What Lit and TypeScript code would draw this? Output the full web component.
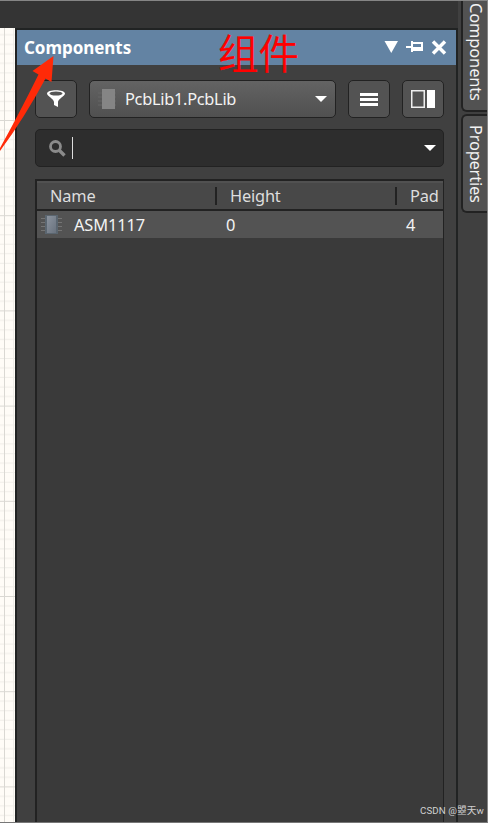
import { LitElement, html, css } from "lit";
import { customElement } from "lit/decorators.js";

@customElement("app-root")
export class AppRoot extends LitElement {
  static styles = css`
    :host { display: block; position: relative; width: 488px; height: 823px; overflow: hidden; box-sizing: border-box;
      background: #3f3f3f; color: #f3f3f3; font: 16.4px/22px "Noto Sans", "Open Sans", sans-serif; }
    * { box-sizing: border-box; }
    svg { display: block; flex: none; }
    .layout { display: grid; grid-template-columns: 15px 443px 30px; height: 823px; }
    .canvas { display: flex; flex-direction: column; border-top: 28px solid #343434; }
    .workspace { padding-top: 28px; background: #343434; }
    .panel { height: 795px; border: 2px solid #212323; border-bottom: 0; background: #404040; }
    .title { display: flex; align-items: center; height: 35px; padding: 0 8px 0 7px; background: #6383a3; color: #fff; }
    .title span { flex: 1; font-size: 17px; font-weight: 700; letter-spacing: -.05px; }
    .tools { display: flex; margin: 15px 12px 0 18px; height: 38px; }
    .button, .combo { display: flex; align-items: center; justify-content: center; height: 38px; border: 1px solid #222; border-radius: 5px; background: #535353; }
    .button { width: 42px; }
    .combo { width: 247px; margin: 0 12px; justify-content: flex-start; padding: 0 8px; background: linear-gradient(#636363, #505050); }
    .combo span { flex: 1; padding-left: 9px; letter-spacing: -.3px; }
    .split { margin-left: 12px; }
    .search { display: flex; align-items: center; height: 38px; margin: 11px 12px 0 18px; padding: 0 7px 0 13px; border: 1px solid #222; border-radius: 5px; background: #2d2d2d; }
    .caret { width: 1px; height: 22px; margin-left: 6px; background: #ddd; }
    .grow { flex: 1; }
    .table { width: 409px; height: 644px; margin: 12px 0 0 18px; border: 2px solid #222; border-right-width: 1px; border-bottom: 0; background: #3a3a3a; }
    .row { display: grid; grid-template-columns: 179px 180px 1fr; align-items: center; height: 27px; background: #535353; }
    .head { grid-template-columns: 180px 180px 1fr; height: 30px; background: #484848; border-top: 2px solid #515151; border-bottom: 2px solid #222; color: #dedede; }
    .head div { height: 18px; line-height: 18px; padding-left: 13px; border-right: 2px solid #222; letter-spacing: -.2px; }
    .head div:last-child { border: 0; }
    .row .cell { padding-left: 10px; }
    .row .first { display: flex; align-items: center; padding-left: 4px; gap: 12px; letter-spacing: -.1px; }
    .tabs { display: flex; flex-direction: column; align-items: flex-end; background: #404040; }
    .tab { width: 27px; border: 2px solid #222; border-right: 0; border-radius: 6px 0 0 6px; background: #525252; writing-mode: vertical-rl; font-size: 16.4px; line-height: 23px; }
    .upper { height: 112px; border-top: 0; border-top-left-radius: 0; padding-top: 3px; letter-spacing: -.1px; }
    .lower { height: 99px; margin-top: 2px; padding-top: 9px; letter-spacing: -.2px; }
    .note { position: absolute; left: 218px; top: 23px; color: #f00; font: 350 40.5px/58px "Noto Sans CJK SC", sans-serif; -webkit-text-stroke: .2px #f00; }
    .arrow { position: absolute; left: 0; top: 50px; }
    .mark { position: absolute; right: 4px; bottom: 5px; color: #d0d0d0; font: 9.7px/14px Roboto, "Noto Sans CJK SC", sans-serif; letter-spacing: .1px; }
    .frame { position: absolute; inset: 0; border: 1px solid #858585; border-left: 0; border-bottom-color: #777; }
  `;

  render() {
    const pins = [3, 7, 11, 15];
    return html`
      <div class="layout">
        <div class="canvas">
          <svg width="15" height="795">
            <defs>
              <pattern id="g" width="15" height="95.2" y="-3.2" patternUnits="userSpaceOnUse">
                <rect width="15" height="95.2" fill="#fffcf7" />
                <path d="M13.5 0V95.2M0 10H15M0 19.5H15M0 29H15M0 38.5H15M0 48H15M0 57.5H15M0 67H15M0 76.5H15M0 86H15" stroke="#efede8" />
                <path d="M4.5 0V95.2M0 .5H15" stroke="#dad8d3" />
              </pattern>
            </defs>
            <rect width="15" height="795" fill="url(#g)" />
          </svg>
        </div>
        <div class="workspace">
          <div class="panel">
            <div class="title">
              <span>Components</span>
              <svg width="64" height="20" fill="#fff">
                <path d="M.5 3H14L7.25 15Z" />
                <path d="M22 8H27V3H29V4H39V13H29V14H27V10H22ZM29 6V9H37V6Z" fill-rule="evenodd" />
                <path d="M49 3.5L61 15.5M61 3.5L49 15.5" stroke="#fff" stroke-width="3.5" />
              </svg>
            </div>
            <div class="tools">
              <div class="button">
                <svg width="20" height="20"><path d="M1 4.5C1 0 19 0 19 4.5C19 7 12 10 12 13V18L8 16V13C8 10 1 7 1 4.5Z" fill="#fff" /><ellipse cx="10" cy="4.5" rx="6.5" ry="2" fill="#555" /></svg>
              </div>
              <div class="combo">
                <svg width="18" height="20"><path d="M0 4H18M0 8H18M0 12H18M0 16H18" stroke="#666" /><rect x="4" width="13" height="20" fill="#858585" /></svg>
                <span>PcbLib1.PcbLib</span>
                <svg width="12" height="6"><path d="M0 0H12L6 6Z" fill="#fff" /></svg>
              </div>
              <div class="button">
                <svg width="18" height="13"><path d="M0 1.5H18M0 6.5H18M0 11.5H18" stroke="#fff" stroke-width="3" /></svg>
              </div>
              <div class="button split">
                <svg width="24" height="18"><rect x=".75" y=".75" width="12.5" height="16.5" fill="none" stroke="#eee" stroke-width="1.5" /><path d="M16 0H24V18H16Z" fill="#fff" /></svg>
              </div>
            </div>
            <div class="search">
              <svg width="17" height="17" fill="none" stroke="#8b8b8b"><circle cx="6.5" cy="6.5" r="5" stroke-width="2.8" /><path d="M10 10L15.5 15.5" stroke-width="3.4" /></svg>
              <i class="caret"></i><i class="grow"></i>
              <svg width="12" height="6"><path d="M0 0H12L6 6Z" fill="#fff" /></svg>
            </div>
            <div class="table">
              <div class="row head"><div>Name</div><div>Height</div><div>Pad</div></div>
              <div class="row">
                <div class="first">
                  <svg width="21" height="20">
                    <defs><linearGradient id="chip" x2="1" y2="1"><stop stop-color="#8c949f" /><stop offset="1" stop-color="#69727e" /></linearGradient></defs>
                    <path d=${pins.map((y) => `M0 ${y + 0.5}H21`).join("")} stroke="#747474" />
                    <rect x="4" y="0" width="13" height="19" fill="#5b6670" /><rect x="6" y="1" width="9" height="17" fill="url(#chip)" />
                  </svg>
                  <span>ASM1117</span>
                </div>
                <div class="cell">0</div><div class="cell">4</div>
              </div>
            </div>
          </div>
        </div>
        <div class="tabs">
          <div class="tab upper">Components</div>
          <div class="tab lower">Properties</div>
        </div>
      </div>
      <div class="note">组件</div>
      <svg class="arrow" width="60" height="105"><path d="M53.5 6L51.5 32L45.5 28.5Q25 67 0 101V98Q19 64 38.5 24.5L32.5 21Z" fill="#ff2a08" /></svg>
      <div class="mark">CSDN @曌天w</div>
      <div class="frame"></div>
    `;
  }
}
